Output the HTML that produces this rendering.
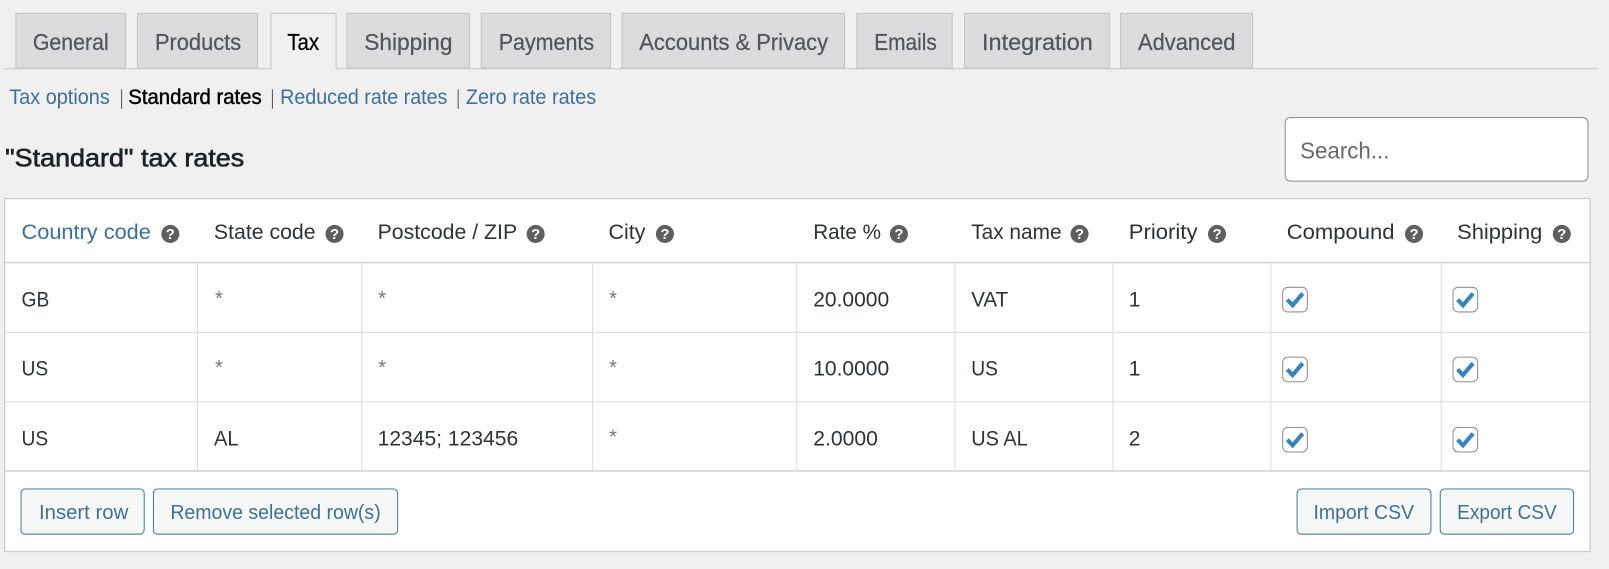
<!DOCTYPE html>
<html lang="en">
<head>
<meta charset="utf-8">
<title>Tax settings</title>
<style>
html,body{margin:0;padding:0;width:1609px;height:569px;overflow:hidden;background:#f0f0f1}
svg{display:block}
text{font-family:"Liberation Sans",sans-serif}
.tab{fill:#dcdcde;stroke:#c3c4c7;stroke-width:1}
.tt{font-size:22.5px;font-weight:400;fill:#50575e;stroke:#50575e;stroke-width:.25}
.sub{font-size:20.5px;fill:#3b709f}
.th{font-size:20.5px;fill:#2c3338}
.td{font-size:20.5px;fill:#2c3338}
.star{font-size:20px;fill:#777}
.btn{fill:#f6f7f7;stroke:#2b6f9f;stroke-width:.9}
.bt{font-size:20px;fill:#3b709f}
.q{font-size:14.5px;font-weight:700;fill:#fff;text-anchor:middle}
.ln{stroke:#dcdcde;stroke-width:1}
.hl{stroke:#c9cacc;stroke-width:1.2}
</style>
</head>
<body>
<svg xmlns="http://www.w3.org/2000/svg" width="1609" height="569" viewBox="0 0 1568 554.5">
<defs>
<g id="qm"><circle cx="0" cy="0" r="8.8" fill="#5f5f5f"/></g>
<g id="cb"><rect x="0.5" y="0.5" width="24" height="24" rx="5" fill="#fff" stroke="#8c8f94" stroke-width="1"/><path d="M5 12.5 L10.2 18 L20 6.5" fill="none" stroke="#3582c4" stroke-width="4"/></g>
</defs>
<rect width="1568" height="554.5" fill="#f0f0f1"/>

<!-- tabs -->
<line x1="4" y1="67" x2="1558" y2="67" stroke="#c3c4c7"/>
<rect class="tab" x="15.5" y="13" width="107" height="53.500"/>
<rect class="tab" x="134" y="13" width="117" height="53.500"/>
<path d="M264 67V13H327.500V67" fill="#f0f0f1" stroke="#c3c4c7"/>
<rect x="265" y="65" width="62" height="3" fill="#f0f0f1"/>
<rect class="tab" x="338" y="13" width="119.500" height="53.500"/>
<rect class="tab" x="469" y="13" width="126" height="53.500"/>
<rect class="tab" x="606" y="13" width="217" height="53.500"/>
<rect class="tab" x="835" y="13" width="93" height="53.500"/>
<rect class="tab" x="940" y="13" width="141" height="53.500"/>
<rect class="tab" x="1092" y="13" width="128.500" height="53.500"/>
<text class="tt" x="32" y="48.500" textLength="74" lengthAdjust="spacingAndGlyphs">General</text>
<text class="tt" x="151" y="48.500" textLength="84" lengthAdjust="spacingAndGlyphs">Products</text>
<text class="tt" x="280" y="48.500" textLength="31" lengthAdjust="spacingAndGlyphs" style="fill:#000;stroke:#000">Tax</text>
<text class="tt" x="355" y="48.500" textLength="86" lengthAdjust="spacingAndGlyphs">Shipping</text>
<text class="tt" x="486" y="48.500" textLength="93" lengthAdjust="spacingAndGlyphs">Payments</text>
<text class="tt" x="623" y="48.500" textLength="184" lengthAdjust="spacingAndGlyphs">Accounts &amp; Privacy</text>
<text class="tt" x="852" y="48.500" textLength="61" lengthAdjust="spacingAndGlyphs">Emails</text>
<text class="tt" x="957" y="48.500" textLength="108" lengthAdjust="spacingAndGlyphs">Integration</text>
<text class="tt" x="1109" y="48.500" textLength="95" lengthAdjust="spacingAndGlyphs">Advanced</text>

<!-- sub nav -->
<text class="sub" x="9" y="101.500" textLength="98" lengthAdjust="spacingAndGlyphs">Tax options</text>
<rect x="118" y="87" width="1" height="19" fill="#50575e"/>
<text x="125" y="101.500" font-size="20.5" font-weight="400" fill="#000" stroke="#000" stroke-width=".45" textLength="130" lengthAdjust="spacingAndGlyphs">Standard rates</text>
<rect x="265" y="87" width="1" height="19" fill="#50575e"/>
<text class="sub" x="273" y="101.500" textLength="163" lengthAdjust="spacingAndGlyphs">Reduced rate rates</text>
<rect x="446" y="87" width="1" height="19" fill="#50575e"/>
<text class="sub" x="454" y="101.500" textLength="127" lengthAdjust="spacingAndGlyphs">Zero rate rates</text>

<!-- heading -->
<text x="5" y="162.500" font-size="24.500" font-weight="400" fill="#1d2327" stroke="#1d2327" stroke-width=".6" textLength="233" lengthAdjust="spacingAndGlyphs">"Standard" tax rates</text>

<!-- search -->
<rect x="1252.500" y="114.500" width="295" height="62" rx="5" fill="#fff" stroke="#8c8f94"/>
<text x="1267" y="154.500" font-size="22.500" fill="#646970" textLength="87" lengthAdjust="spacingAndGlyphs">Search...</text>

<!-- table -->
<rect x="4.500" y="193.500" width="1545" height="344" fill="#fff" stroke="#c9cacc" stroke-width="1.2"/>
<line class="hl" x1="5" y1="256" x2="1549" y2="256"/>
<line class="ln" x1="5" y1="324" x2="1549" y2="324"/>
<line class="ln" x1="5" y1="391.500" x2="1549" y2="391.500"/>
<line class="hl" x1="5" y1="459" x2="1549" y2="459"/>
<g class="ln">
<line x1="192.500" y1="257" x2="192.500" y2="459"/>
<line x1="352.500" y1="257" x2="352.500" y2="459"/>
<line x1="577.500" y1="257" x2="577.500" y2="459"/>
<line x1="776.500" y1="257" x2="776.500" y2="459"/>
<line x1="930.500" y1="257" x2="930.500" y2="459"/>
<line x1="1084.500" y1="257" x2="1084.500" y2="459"/>
<line x1="1238.500" y1="257" x2="1238.500" y2="459"/>
<line x1="1404.500" y1="257" x2="1404.500" y2="459"/>
</g>

<!-- header -->
<text class="th" x="21" y="233" textLength="126" lengthAdjust="spacingAndGlyphs" style="fill:#3b709f">Country code</text>
<text class="th" x="208.500" y="233" textLength="99" lengthAdjust="spacingAndGlyphs">State code</text>
<text class="th" x="368" y="233" textLength="136" lengthAdjust="spacingAndGlyphs">Postcode / ZIP</text>
<text class="th" x="593" y="233" textLength="36" lengthAdjust="spacingAndGlyphs">City</text>
<text class="th" x="792.500" y="233" textLength="66" lengthAdjust="spacingAndGlyphs">Rate %</text>
<text class="th" x="946.500" y="233" textLength="88" lengthAdjust="spacingAndGlyphs">Tax name</text>
<text class="th" x="1100" y="233" textLength="67" lengthAdjust="spacingAndGlyphs">Priority</text>
<text class="th" x="1254" y="233" textLength="105" lengthAdjust="spacingAndGlyphs">Compound</text>
<text class="th" x="1420" y="233" textLength="83" lengthAdjust="spacingAndGlyphs">Shipping</text>

<use href="#qm" x="166" y="228"/><text class="q" x="166" y="233">?</text>
<use href="#qm" x="326" y="228"/><text class="q" x="326" y="233">?</text>
<use href="#qm" x="522" y="228"/><text class="q" x="522" y="233">?</text>
<use href="#qm" x="648" y="228"/><text class="q" x="648" y="233">?</text>
<use href="#qm" x="876" y="228"/><text class="q" x="876" y="233">?</text>
<use href="#qm" x="1052" y="228"/><text class="q" x="1052" y="233">?</text>
<use href="#qm" x="1186" y="228"/><text class="q" x="1186" y="233">?</text>
<use href="#qm" x="1378" y="228"/><text class="q" x="1378" y="233">?</text>
<use href="#qm" x="1522" y="228"/><text class="q" x="1522" y="233">?</text>

<!-- row 1 -->
<text class="td" x="21" y="298.500" textLength="27" lengthAdjust="spacingAndGlyphs">GB</text>
<text class="star" x="209.500" y="297">*</text>
<text class="star" x="368.500" y="297">*</text>
<text class="star" x="593.500" y="297">*</text>
<text class="td" x="792.500" y="298.500" textLength="74" lengthAdjust="spacingAndGlyphs">20.0000</text>
<text class="td" x="946.500" y="298.500" textLength="36" lengthAdjust="spacingAndGlyphs">VAT</text>
<text class="td" x="1100" y="298.500">1</text>
<use href="#cb" x="1249.500" y="279.500"/>
<use href="#cb" x="1415.500" y="279.500"/>

<!-- row 2 -->
<text class="td" x="21" y="366" textLength="26" lengthAdjust="spacingAndGlyphs">US</text>
<text class="star" x="209.500" y="364.500">*</text>
<text class="star" x="368.500" y="364.500">*</text>
<text class="star" x="593.500" y="364.500">*</text>
<text class="td" x="792.500" y="366" textLength="74" lengthAdjust="spacingAndGlyphs">10.0000</text>
<text class="td" x="946.500" y="366" textLength="26" lengthAdjust="spacingAndGlyphs">US</text>
<text class="td" x="1100" y="366">1</text>
<use href="#cb" x="1249.500" y="347.500"/>
<use href="#cb" x="1415.500" y="347.500"/>

<!-- row 3 -->
<text class="td" x="21" y="434" textLength="26" lengthAdjust="spacingAndGlyphs">US</text>
<text class="td" x="208.500" y="434" textLength="24" lengthAdjust="spacingAndGlyphs">AL</text>
<text class="td" x="368" y="434" textLength="137" lengthAdjust="spacingAndGlyphs">12345; 123456</text>
<text class="star" x="593.500" y="432">*</text>
<text class="td" x="792.500" y="434" textLength="63" lengthAdjust="spacingAndGlyphs">2.0000</text>
<text class="td" x="946.500" y="434" textLength="55" lengthAdjust="spacingAndGlyphs">US AL</text>
<text class="td" x="1100" y="434">2</text>
<use href="#cb" x="1249.500" y="416"/>
<use href="#cb" x="1415.500" y="416"/>

<!-- buttons -->
<rect class="btn" x="20.500" y="476.500" width="120" height="44" rx="4"/>
<text class="bt" x="38" y="506" textLength="87" lengthAdjust="spacingAndGlyphs">Insert row</text>
<rect class="btn" x="149.500" y="476.500" width="238" height="44" rx="4"/>
<text class="bt" x="166" y="506" textLength="205" lengthAdjust="spacingAndGlyphs">Remove selected row(s)</text>
<rect class="btn" x="1264" y="476.500" width="130.500" height="44" rx="4"/>
<text class="bt" x="1280" y="506" textLength="98" lengthAdjust="spacingAndGlyphs">Import CSV</text>
<rect class="btn" x="1403.500" y="476.500" width="130" height="44" rx="4"/>
<text class="bt" x="1420" y="506" textLength="97" lengthAdjust="spacingAndGlyphs">Export CSV</text>
</svg>
</body>
</html>
